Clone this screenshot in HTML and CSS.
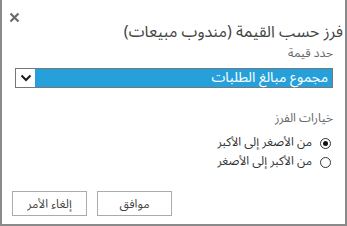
FILE: index.html
```html
<!DOCTYPE html>
<html lang="ar" dir="rtl">
<head>
<meta charset="utf-8">
<link rel="stylesheet" href="styles.css">
</head>
<body>
<div class="dialog">
  <div class="header">
    <h1 class="title">فرز حسب القيمة (مندوب مبيعات)</h1>
    <span class="close" aria-label="إغلاق">
      <svg width="11" height="11" viewBox="0 0 11 11"><path d="M1.5 1.5 L9.5 9.5 M9.5 1.5 L1.5 9.5" stroke="#6b6b6b" stroke-width="2.2" fill="none"/></svg>
    </span>
  </div>
  <div class="content">
    <div class="label">حدد قيمة</div>
    <div class="select">
      <span class="select-value">مجموع مبالغ الطلبات</span>
      <span class="select-arrow">
        <svg width="12" height="8" viewBox="0 0 12 8"><path d="M1.5 1.5 L6 6 L10.5 1.5" stroke="#1b1b1b" stroke-width="2" fill="none"/></svg>
      </span>
    </div>
    <div class="label group-label">خيارات الفرز</div>
    <div class="options">
      <label class="option"><span class="radio checked"></span><span class="option-text">من الأصغر إلى الأكبر</span></label>
      <label class="option"><span class="radio"></span><span class="option-text">من الأكبر إلى الأصغر</span></label>
    </div>
  </div>
  <div class="footer">
    <button class="btn">موافق</button>
    <button class="btn">إلغاء الأمر</button>
  </div>
</div>
</body>
</html>
```
FILE: styles.css
```css
* { box-sizing: border-box; }
html, body { margin: 0; padding: 0; background: #fff; }
body {
  font-family: "Noto Sans Arabic", "DejaVu Sans", sans-serif;
  color: #444;
}
.dialog {
  width: 347px;
  height: 226px;
  border: 2px solid #8a8a8a;
  border-top: 0;
  background: #fff;
  display: flex;
  flex-direction: column;
}
.header {
  display: flex;
  justify-content: space-between;
  align-items: flex-start;
  padding: 12px 2px 0 7px;
}
.title {
  margin: 10px 0 0 0;
  font-size: 16px;
  font-weight: normal;
  line-height: 20px;
  color: #444;
}
.close {
  display: block;
  width: 11px;
  height: 11px;
}
.close svg { display: block; }
.content {
  padding: 0 12px 0 13px;
}
.label {
  font-size: 12px;
  line-height: 16px;
  color: #666;
  margin-top: 4px;
}
.select {
  margin-top: 6px;
  height: 20px;
  border: 1px solid #777;
  display: flex;
  align-items: stretch;
}
.select-value {
  flex: 1;
  background: #26a0da;
  color: #fff;
  font-size: 14px;
  line-height: 18px;
  padding-right: 4px;
}
.select-arrow {
  width: 19px;
  background: #fff;
  display: flex;
  align-items: center;
  justify-content: center;
}
.select-arrow svg { display: block; }
.group-label {
  margin-top: 23px;
}
.options {
  margin-top: 8px;
  display: flex;
  flex-direction: column;
  gap: 3px;
  padding-right: 2px;
}
.option {
  display: flex;
  align-items: center;
  gap: 8px;
  font-size: 12px;
  line-height: 16px;
  color: #333;
}
.radio {
  width: 11px;
  height: 11px;
  border: 1px solid #333;
  border-radius: 50%;
  flex: none;
  position: relative;
}
.radio.checked::after {
  content: "";
  position: absolute;
  left: 2px;
  top: 2px;
  width: 5px;
  height: 5px;
  border-radius: 50%;
  background: #111;
}
.footer {
  margin-top: auto;
  display: flex;
  gap: 10px;
  padding: 0 10px 8px 10px;
  direction: ltr;
  flex-direction: row-reverse;
  justify-content: flex-end;
}
.btn {
  direction: rtl;
  width: 75px;
  height: 25px;
  border: 1px solid #ababab;
  background: #fff;
  font-family: inherit;
  font-size: 12px;
  color: #444;
  padding: 0;
}
```
